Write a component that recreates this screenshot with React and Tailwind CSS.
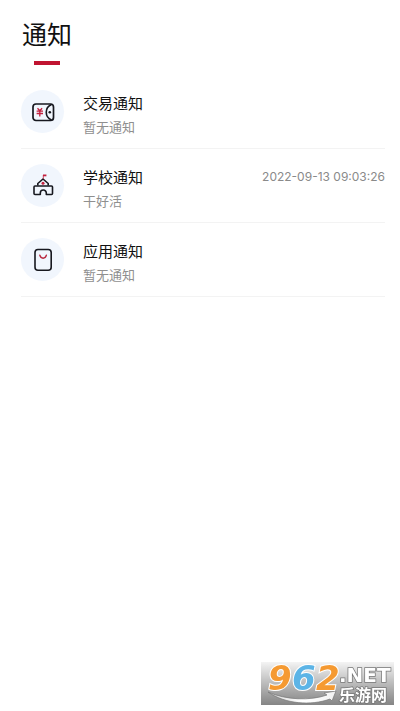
function PaymentIcon() {
  return (
    <svg width="24" height="24" viewBox="0 0 24 24" fill="none" aria-hidden="true">
      <rect x="2" y="4" width="20.500" height="16.500" rx="3" stroke="#17181f" strokeWidth="1.700" />
      <path d="M20.500 4.500C13.500 7.500 13.500 17 20.500 20" stroke="#17181f" strokeWidth="1.600" />
      <circle cx="18.800" cy="12.300" r="1.300" fill="#17181f" />
      <path d="M6.500 8.300l2.300 2.500 2.300-2.500M5.600 11.200h6.400M5.600 13.500h6.400M8.800 11v5.500" stroke="#c4203e" strokeWidth="1.300" />
    </svg>
  );
}

function SchoolIcon() {
  return (
    <svg width="24" height="24" viewBox="0 0 24 24" fill="none" aria-hidden="true">
      <path d="M6.800 11.500V9.500L12 5l5.200 4.500v2" stroke="#17181f" strokeWidth="1.600" strokeLinejoin="round" />
      <path
        d="M4 12h16.500a1 1 0 0 1 1 1v6.500a1 1 0 0 1-1 1h-5.200V19a3 3 0 0 0-6 0v1.500H4a1 1 0 0 1-1-1V13a1 1 0 0 1 1-1z"
        stroke="#17181f"
        strokeWidth="1.600"
        strokeLinejoin="round"
      />
      <path d="M12.300 5V1" stroke="#c4203e" strokeWidth="0.800" />
      <rect x="12" y="0.500" width="3.400" height="1.800" fill="#c4203e" />
      <circle cx="12" cy="9.200" r="1.500" fill="#c4203e" />
    </svg>
  );
}

function AppIcon() {
  return (
    <svg width="24" height="24" viewBox="0 0 24 24" fill="none" aria-hidden="true">
      <rect x="4" y="1.500" width="16.200" height="20.800" rx="3" stroke="#17181f" strokeWidth="1.600" />
      <path d="M8.800 7.200c1 4 5.600 4 6.600 0" stroke="#b8283f" strokeWidth="1.400" strokeLinecap="round" />
    </svg>
  );
}

const notices = [
  { title: "交易通知", text: "暂无通知", Icon: PaymentIcon },
  { title: "学校通知", text: "干好活", time: "2022-09-13 09:03:26", Icon: SchoolIcon },
  { title: "应用通知", text: "暂无通知", Icon: AppIcon },
];

function Notice({ title, text, time, Icon }) {
  return (
    <li className="flex items-start gap-[19px] border-b border-[#f3f3f3] pt-[15px] pb-[9px]">
      <div className="flex size-[43px] shrink-0 items-center justify-center rounded-full bg-[#f1f6fd]">
        <Icon />
      </div>
      <div className="min-w-0 flex-1 pt-px">
        <div className="flex items-start justify-between">
          <h2 className="text-[15px] leading-6 text-[#111111]">{title}</h2>
          {time && <time className="font-['Inter',sans-serif] text-xs leading-6 text-[#8a8a8a]">{time}</time>}
        </div>
        <p className="text-[13px] leading-6 text-[#8f8f8f]">{text}</p>
      </div>
    </li>
  );
}

function Watermark() {
  return (
    <div className="fixed right-[6px] bottom-[6px] h-[43px] w-[133px] bg-linear-to-b from-[#f4f4f4] to-[#858585]">
      <svg className="overflow-visible" width="133" height="43" viewBox="0 0 133 43" role="img" aria-label="962.NET 乐游网">
        <defs>
          <linearGradient id="swoosh" x1="0" y1="0" x2="1" y2="0">
            <stop offset="0" stopColor="#d4d4d4" />
            <stop offset="0.500" stopColor="#ffffff" />
            <stop offset="1" stopColor="#f2f2f2" />
          </linearGradient>
        </defs>
        <path
          d="M7 30c18 8 42 9 59 3l-3-2 12-2-4 10-2-2C50 44 24 42 7 30z"
          fill="url(#swoosh)"
          stroke="#777777"
          strokeWidth="0.700"
        />
        <g
          fontFamily="DejaVu Sans, sans-serif"
          fontWeight="700"
          fontStyle="italic"
          fontSize="34"
          stroke="#ffffff"
          strokeWidth="2"
          paintOrder="stroke"
        >
          <text x="7" y="28" fill="#f59a32">9</text>
          <text x="31" y="28" fill="#5cb4e6">6</text>
          <text x="55" y="28" fill="#f59a32">2</text>
        </g>
        <g fill="#ffffff" stroke="#777777" strokeWidth="1.500" paintOrder="stroke" fontWeight="700">
          <text x="78" y="20" fontFamily="DejaVu Sans, sans-serif" fontSize="20">.NET</text>
          <text x="78" y="39" fontFamily="Noto Sans CJK SC, sans-serif" fontSize="16">乐游网</text>
        </g>
      </svg>
    </div>
  );
}

export default function App() {
  return (
    <div className="min-h-screen bg-white font-['Noto_Sans_CJK_SC',sans-serif]">
      <header className="flex px-[22px] pt-4">
        <div className="flex flex-col items-center gap-[10px]">
          <h1 className="text-[25px] leading-[35px] text-[#111111]">通知</h1>
          <div className="h-1 w-[26px] bg-[#c01431]" />
        </div>
      </header>
      <main className="pt-[10px] pr-[15px] pl-[21px]">
        <ul>
          {notices.map((notice) => (
            <Notice key={notice.title} {...notice} />
          ))}
        </ul>
      </main>
      <Watermark />
    </div>
  );
}
